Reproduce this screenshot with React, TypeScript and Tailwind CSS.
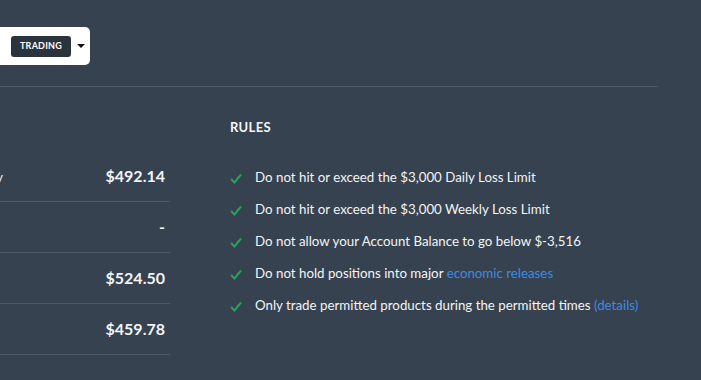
const STATS = [
  { label: 'Today', value: '$492.14' },
  { label: '', value: '-' },
  { label: '', value: '$524.50' },
  { label: '', value: '$459.78' },
];

const RULES: { text: string; link?: string }[] = [
  { text: 'Do not hit or exceed the $3,000 Daily Loss Limit' },
  { text: 'Do not hit or exceed the $3,000 Weekly Loss Limit' },
  { text: 'Do not allow your Account Balance to go below $-3,516' },
  { text: 'Do not hold positions into major ', link: 'economic releases' },
  { text: 'Only trade permitted products during the permitted times ', link: '(details)' },
];

function Check() {
  return (
    <svg width="12" height="11" viewBox="0 0 12 11" className="shrink-0">
      <path d="M1 6 L4.5 9.5 L11 1.5" fill="none" stroke="#21a45a" strokeWidth="2" />
    </svg>
  );
}

export default function App() {
  return (
    <div
      className="w-[701px] h-[380px] bg-[#36424f] overflow-hidden text-[#f3f4f6]"
      style={{ fontFamily: 'Lato, "Open Sans", sans-serif' }}
    >
      {/* Header */}
      <div className="w-[658px] h-[87px] border-b border-[#4b5968] pt-[27px]">
        <div className="w-[90px] h-[38px] bg-white rounded-r-[5px] flex items-center pl-[11px] gap-[6px]">
          <div className="h-[21px] w-[60px] rounded-[3px] bg-[#2b333d] text-white text-[9px] font-bold flex items-center justify-center tracking-wide">
            TRADING
          </div>
          <div className="w-0 h-0 border-l-[4px] border-r-[4px] border-t-[4px] border-l-transparent border-r-transparent border-t-[#111]" />
        </div>
      </div>

      <div className="flex">
        {/* Stats */}
        <div className="w-[170px] pt-[64px] shrink-0">
          {STATS.map((s, i) => (
            <div key={i} className="h-[51px] border-b border-[#4b5968] flex items-center justify-end pr-[5px] relative">
              {s.label && (
                <span className="absolute right-[167px] text-[13px] top-[17px] whitespace-nowrap">{s.label}</span>
              )}
              <span className="text-[16px] font-bold">{s.value}</span>
            </div>
          ))}
        </div>

        {/* Rules */}
        <div className="ml-[60px] pt-[33px]">
          <div className="text-[13px] font-bold tracking-wide h-[14px] leading-[14px]">RULES</div>
          <div className="mt-[28px] flex flex-col">
            {RULES.map((r) => (
              <div key={r.text} className="h-[32px] flex items-center gap-[13px] text-[13.3px]">
                <Check />
                <span>
                  {r.text}
                  {r.link && <span className="text-[#3f8ae0]">{r.link}</span>}
                </span>
              </div>
            ))}
          </div>
        </div>
      </div>
    </div>
  );
}
